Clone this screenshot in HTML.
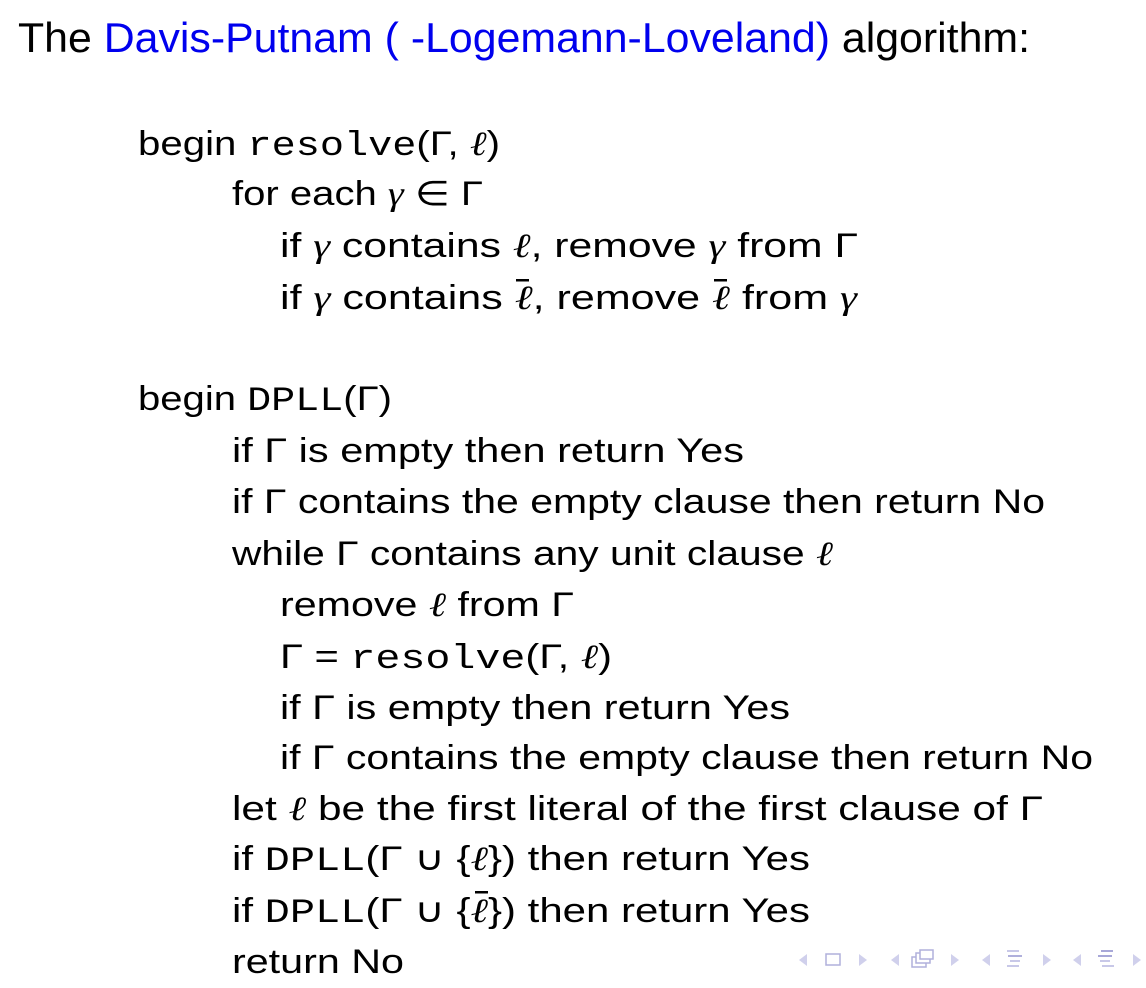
<!DOCTYPE html>
<html><head><meta charset="utf-8"><style>
html,body{margin:0;padding:0;background:#fff;width:1146px;height:988px;overflow:hidden}
svg{display:block}
text{font-family:"Liberation Sans","DejaVu Sans",sans-serif;font-size:34px;fill:#000}
.m{font-family:"Liberation Mono",monospace}
.i{font-family:"Liberation Serif",serif;font-style:italic}
</style></head><body>
<svg width="1146" height="988" viewBox="0 0 1146 988">
<text x="18" y="52" style="font-size:42px" textLength="1012" lengthAdjust="spacingAndGlyphs">The <tspan fill="#0000ee">Davis-Putnam ( -Logemann-Loveland)</tspan> algorithm:</text>

<text x="138" y="155" textLength="362" lengthAdjust="spacingAndGlyphs">begin <tspan class="m">resolve</tspan>(Γ, <tspan class="i">ℓ</tspan>)</text>
<text x="232" y="205" textLength="251" lengthAdjust="spacingAndGlyphs">for each <tspan class="i">γ</tspan> ∈ Γ</text>
<text x="280" y="257" textLength="578" lengthAdjust="spacingAndGlyphs">if <tspan class="i">γ</tspan> contains <tspan class="i">ℓ</tspan>, remove <tspan class="i">γ</tspan> from Γ</text>
<text x="280" y="309" textLength="577" lengthAdjust="spacingAndGlyphs">if <tspan class="i">γ</tspan> contains <tspan class="i">ℓ</tspan>, remove <tspan class="i">ℓ</tspan> from <tspan class="i">γ</tspan></text>
<rect x="516" y="279" width="13" height="2.5" fill="#000"/>
<rect x="714" y="279" width="13" height="2.5" fill="#000"/>

<text x="138" y="410" textLength="254" lengthAdjust="spacingAndGlyphs">begin <tspan class="m">DPLL</tspan>(Γ)</text>
<text x="232" y="462" textLength="512" lengthAdjust="spacingAndGlyphs">if Γ is empty then return Yes</text>
<text x="232" y="513" textLength="813" lengthAdjust="spacingAndGlyphs">if Γ contains the empty clause then return No</text>
<text x="232" y="565" textLength="601" lengthAdjust="spacingAndGlyphs">while Γ contains any unit clause <tspan class="i">ℓ</tspan></text>
<text x="280" y="616" textLength="294" lengthAdjust="spacingAndGlyphs">remove <tspan class="i">ℓ</tspan> from Γ</text>
<text x="280" y="668" textLength="332" lengthAdjust="spacingAndGlyphs">Γ = <tspan class="m">resolve</tspan>(Γ, <tspan class="i">ℓ</tspan>)</text>
<text x="280" y="719" textLength="510" lengthAdjust="spacingAndGlyphs">if Γ is empty then return Yes</text>
<text x="280" y="769" textLength="813" lengthAdjust="spacingAndGlyphs">if Γ contains the empty clause then return No</text>
<text x="232" y="820" textLength="811" lengthAdjust="spacingAndGlyphs">let <tspan class="i">ℓ</tspan> be the first literal of the first clause of Γ</text>
<text x="232" y="870" textLength="578" lengthAdjust="spacingAndGlyphs">if <tspan class="m">DPLL</tspan>(Γ ∪ {<tspan class="i">ℓ</tspan>}) then return Yes</text>
<text x="232" y="922" textLength="578" lengthAdjust="spacingAndGlyphs">if <tspan class="m">DPLL</tspan>(Γ ∪ {<tspan class="i">ℓ</tspan>}) then return Yes</text>
<rect x="475" y="891" width="13" height="2.5" fill="#000"/>
<text x="232" y="973" textLength="172" lengthAdjust="spacingAndGlyphs">return No</text>

<g fill="#d0d0ec" stroke="none">
<polygon points="807,954 807,966 799,960"/>
<polygon points="859,954 859,966 867,960"/>
<polygon points="899,954 899,966 891,960"/>
<polygon points="951,954 951,966 959,960"/>
<polygon points="990,954 990,966 982,960"/>
<polygon points="1043,954 1043,966 1051,960"/>
<polygon points="1081,954 1081,966 1073,960"/>
<polygon points="1133,954 1133,966 1141,960"/>
</g>
<g fill="none" stroke="#b0b0dc" stroke-width="1.5">
<rect x="826" y="954" width="14" height="11"/>
<rect x="912" y="957" width="14" height="10" fill="#fff"/>
<rect x="916" y="953" width="14" height="10" fill="#fff"/>
<rect x="920" y="950" width="13" height="9" fill="#fff"/>
</g>
<g fill="#c8c8e8">
<rect x="1007" y="950" width="12" height="2"/>
<rect x="1008" y="955" width="14" height="2" fill="#b0b0dc"/>
<rect x="1010" y="960" width="10" height="2"/>
<rect x="1007" y="965" width="12" height="2"/>
<rect x="1101" y="950" width="12" height="2" fill="#a8a8d8"/>
<rect x="1098" y="955" width="14" height="2" fill="#a8a8d8"/>
<rect x="1100" y="960" width="10" height="2"/>
<rect x="1102" y="965" width="12" height="2"/>
</g>
</svg>
</body></html>
